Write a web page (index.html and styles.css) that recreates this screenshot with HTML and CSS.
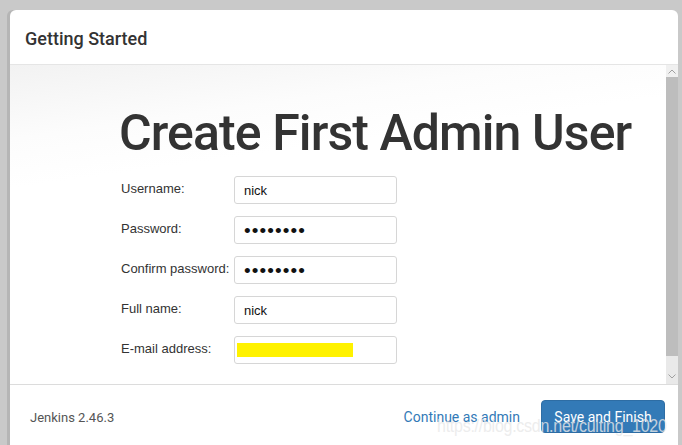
FILE: index.html
```html
<!DOCTYPE html>
<html lang="en">
<head>
<meta charset="utf-8">
<title>Getting Started</title>
<link rel="stylesheet" href="styles.css">
</head>
<body>
<div class="modal">
  <div class="modal-header">
    <h1 class="modal-title">Getting Started</h1>
  </div>
  <div class="modal-body">
    <div class="content">
      <h2 class="page-title">Create First Admin User</h2>
      <form class="form">
        <div class="row"><label class="lbl">Username:</label><input class="field" type="text" value="nick"></div>
        <div class="row"><label class="lbl">Password:</label><input class="field pw" type="password" value="12345678"></div>
        <div class="row"><label class="lbl">Confirm password:</label><input class="field pw" type="password" value="12345678"></div>
        <div class="row"><label class="lbl">Full name:</label><input class="field" type="text" value="nick"></div>
        <div class="row"><label class="lbl">E-mail address:</label><div class="field email"><span class="redact"></span></div></div>
      </form>
    </div>
    <div class="scrollbar">
      <div class="sb-top"><svg width="8" height="5" viewBox="0 0 8 5"><polyline points="0.5,4.5 4,1 7.5,4.5" fill="none" stroke="#a0a0a0" stroke-width="1"/></svg></div>
      <div class="sb-thumb"></div>
      <div class="sb-bottom"><svg width="8" height="5" viewBox="0 0 8 5"><polyline points="0.5,0.5 4,4 7.5,0.5" fill="none" stroke="#a0a0a0" stroke-width="1"/></svg></div>
    </div>
  </div>
  <div class="modal-footer">
    <span class="version">Jenkins 2.46.3</span>
    <div class="actions">
      <a class="link" href="#">Continue as admin</a>
      <button class="btn" type="button">Save and Finish</button>
    </div>
  </div>
</div>
<div class="watermark">https://blog.csdn.net/cuiting_1020</div>
</body>
</html>
```

FILE: styles.css
```css
html, body {
  margin: 0;
  padding: 0;
  height: 445px;
  overflow: hidden;
}
body {
  background: #c9c9c9;
  font-family: Roboto, "Liberation Sans", sans-serif;
  position: relative;
  padding: 10px 4px 0 10px;
  box-sizing: border-box;
}
.modal {
  width: 668px;
  height: 435px;
  background: #fff;
  border-radius: 6px 6px 0 0;
  box-shadow: -3px 0 0 #b5b5b5;
  display: flex;
  flex-direction: column;
  overflow: hidden;
}
.modal-header {
  height: 55px;
  flex: none;
  border-bottom: 1px solid #e5e5e5;
  display: flex;
  align-items: center;
  padding: 2px 0 0 15px;
  box-sizing: border-box;
}
.modal-title {
  margin: 0;
  font-size: 18px;
  font-weight: 500;
  color: #333;
}
.modal-body {
  height: 320px;
  flex: none;
  display: flex;
  border-bottom: 1px solid #dcdcdc;
  box-sizing: border-box;
  background: linear-gradient(172deg, #f2f2f2 0%, #fcfcfc 18%, #fff 30%);
}
.content {
  flex: 1;
  padding-left: 109px;
}
.page-title {
  margin: 38px 0 0 0;
  font-size: 50px;
  font-weight: 500;
  letter-spacing: -0.9px;
  line-height: 60px;
  color: #333;
  white-space: nowrap;
}
.form {
  margin-top: 13px;
  display: flex;
  flex-direction: column;
  gap: 12px;
}
.row {
  display: flex;
  align-items: flex-start;
}
.lbl {
  width: 113px;
  padding-left: 2px;
  padding-top: 5px;
  font-family: "Liberation Sans", Arial, sans-serif;
  font-size: 13px;
  color: #333;
}
.field {
  width: 163px;
  height: 28px;
  box-sizing: border-box;
  border: 1px solid #d6d6d6;
  border-radius: 3px;
  padding: 0 9px;
  font-family: "Liberation Sans", Arial, sans-serif;
  font-size: 13px;
  color: #111;
  background: #fff;
  margin: 0;
  outline: none;
}
.pw {
  font-size: 19px;
  letter-spacing: 1.1px;
  padding-top: 2px;
}
.email {
  display: flex;
  align-items: center;
  padding: 0 0 0 2px;
}
.redact {
  display: block;
  width: 116px;
  height: 14px;
  background: #fff200;
}
.scrollbar {
  width: 12px;
  display: flex;
  flex-direction: column;
  background: #ececec;
}
.sb-top {
  height: 12px;
  display: flex;
  align-items: center;
  justify-content: center;
  background: #f0f0f0;
}
.sb-thumb {
  height: 279px;
  background: #bdbdbd;
}
.sb-bottom {
  flex: 1;
  display: flex;
  align-items: flex-end;
  justify-content: center;
  padding-bottom: 5px;
  background: #e9e9e9;
}
.modal-footer {
  display: flex;
  align-items: flex-start;
  justify-content: space-between;
  padding: 15px 13px 0 20px;
}
.version {
  margin-top: 10px;
  font-size: 13px;
  color: #555;
}
.actions {
  display: flex;
  align-items: center;
  gap: 21px;
}
.link {
  font-size: 14px;
  color: #337ab7;
  text-decoration: none;
}
.btn {
  width: 124px;
  height: 33px;
  background: #337ab7;
  border: 1px solid #2e6da4;
  border-radius: 4px;
  color: #fff;
  font-family: Roboto, "Liberation Sans", sans-serif;
  font-size: 14px;
  padding: 0;
}
.watermark {
  position: absolute;
  left: 437px;
  top: 416px;
  font-family: "Liberation Sans", Arial, sans-serif;
  font-size: 18px;
  letter-spacing: -0.3px;
  color: rgba(232, 232, 232, 0.8);
  white-space: nowrap;
  transform: scaleX(0.89);
  transform-origin: left center;
}
```
